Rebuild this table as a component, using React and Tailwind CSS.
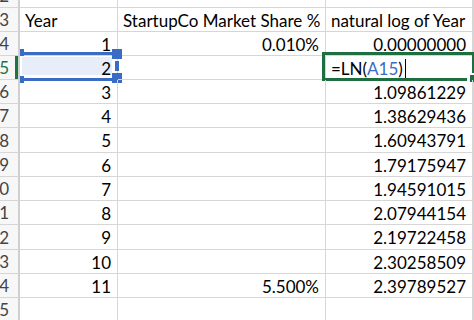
const ROWS = [
  { n: 2, h: "h-[8px]", a: "", b: "", c: "" },
  { n: 3, h: "h-[24px]", a: "Year", b: "StartupCo Market Share %", c: "natural log of Year", text: true },
  { n: 4, h: "h-[24px]", a: "1", b: "0.010%", c: "0.00000000" },
  { n: 5, h: "h-[24px]", a: "2", b: "", c: "", active: true },
  { n: 6, h: "h-[24px]", a: "3", b: "", c: "1.09861229" },
  { n: 7, h: "h-[24px]", a: "4", b: "", c: "1.38629436" },
  { n: 8, h: "h-[25px]", a: "5", b: "", c: "1.60943791" },
  { n: 9, h: "h-[24px]", a: "6", b: "", c: "1.79175947" },
  { n: 10, h: "h-[24px]", a: "7", b: "", c: "1.94591015" },
  { n: 11, h: "h-[24px]", a: "8", b: "", c: "2.07944154" },
  { n: 12, h: "h-[25px]", a: "9", b: "", c: "2.19722458" },
  { n: 13, h: "h-[24px]", a: "10", b: "", c: "2.30258509" },
  { n: 14, h: "h-[24px]", a: "11", b: "5.500%", c: "2.39789527" },
  { n: 15, h: "h-[24px]", a: "", b: "", c: "" },
];

function Cell({ w, value, text, children }) {
  return (
    <div
      className={`${w} relative h-full flex items-center pt-[2px] border-r border-b border-[#d6d6d6] whitespace-nowrap ${
        text ? "justify-start pl-[5px]" : "justify-end pr-[6px]"
      }`}
    >
      {children}
      {value && <span className="relative">{value}</span>}
    </div>
  );
}

// blue reference highlight shown around A15 while the formula is edited
function RefHighlight() {
  return (
    <>
      <div className="absolute left-[2px] right-[5px] top-[1px] bottom-[4px] bg-[#e8eef9]" />
      <div className="absolute left-[2px] right-[4px] top-[-4px] h-[3px] bg-[#3a6cc6]" />
      <div className="absolute left-[2px] right-[4px] top-[22px] h-[3px] bg-[#3a6cc6]" />
      <div className="absolute left-0 top-[-7px] w-[4px] h-[7px] bg-[#3a6cc6]" />
      <div className="absolute left-0 top-[20px] w-[4px] h-[7px] bg-[#3a6cc6]" />
      <div className="absolute right-[-5px] top-[-7px] w-[10px] h-[10px] bg-[#3a6cc6]" />
      <div className="absolute right-[-2px] top-[5px] w-[4px] h-[10px] bg-[#3a6cc6]" />
      <div className="absolute right-[-5px] top-[17px] w-[10px] h-[10px] bg-[#3a6cc6]" />
    </>
  );
}

function Editor() {
  return (
    <div className="relative w-[147px] h-full flex items-center pt-[2px] pl-[5px] border-b border-[#d6d6d6] bg-white whitespace-nowrap">
      <span>=LN(</span>
      <span className="text-[#3a6cc6]">A15</span>
      <span>)</span>
      <span className="ml-[2px] w-[1.5px] h-[19px] bg-black" />
      <div className="absolute left-[-4px] top-[-4px] right-[-2px] bottom-[-2px] border-[3px] border-[#1e6e42]" />
      <div className="absolute left-[141px] top-[17px] w-[10px] h-[9px] bg-[#1e6e42] border-l-[3px] border-t-[2px] border-white" />
    </div>
  );
}

export default function App() {
  return (
    <div
      className="w-[474px] h-[320px] overflow-hidden bg-white text-[17px] text-black"
      style={{ fontFamily: "Lato, 'Open Sans', sans-serif" }}
    >
      {ROWS.map((r) => (
        <div key={r.n} className={`flex ${r.h}`}>
          <div className="w-[20px] h-full relative flex items-end justify-end pr-[9px] bg-[#f7f7f7] border-r-2 border-b border-r-[#cfcfcf] border-b-[#d6d6d6] overflow-hidden">
            <span
              className={`h-[22px] leading-[22px] ${r.active ? "text-[#217346]" : "text-[#444]"}`}
            >
              {r.n}
            </span>
            {r.active && (
              <div className="absolute right-0 top-0 bottom-0 w-[3px] bg-[#217346]" />
            )}
          </div>
          <Cell w="w-[98px]" value={r.a} text={r.text}>
            {r.active && <RefHighlight />}
          </Cell>
          <Cell w="w-[208px]" value={r.b} text={r.text} />
          {r.active ? <Editor /> : <Cell w="w-[147px]" value={r.c} text={r.text} />}
          <div className="flex-1 h-full border-b border-l border-[#d6d6d6]" />
        </div>
      ))}
    </div>
  );
}
